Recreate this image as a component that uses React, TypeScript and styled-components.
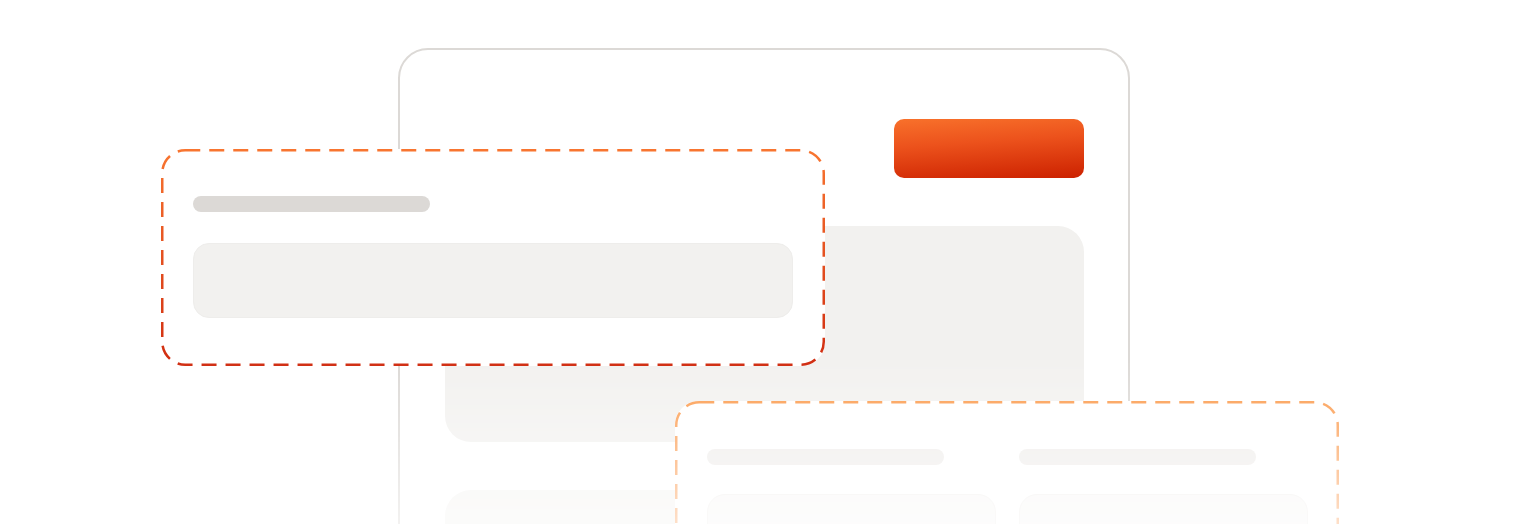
import React from "react";
import styled, { createGlobalStyle } from "styled-components";

const Global = createGlobalStyle`
  html, body { margin: 0; padding: 0; background: #ffffff; }
  body { font-family: "Inter", "Liberation Sans", sans-serif; }
`;

const Stage = styled.div`
  position: relative;
  width: 1536px;
  height: 524px;
  overflow: hidden;
  background: #ffffff;
  -webkit-mask-image: linear-gradient(to bottom, #000 360px, rgba(0, 0, 0, 0.35) 524px);
  mask-image: linear-gradient(to bottom, #000 360px, rgba(0, 0, 0, 0.35) 524px);
`;

const Window = styled.div`
  position: absolute;
  left: 398px;
  top: 48px;
  width: 732px;
  height: 620px;
  box-sizing: border-box;
  border: 2px solid #dcd9d6;
  border-radius: 30px;
  background: #ffffff;
  padding: 69px 44px 0 45px;
  display: flex;
  flex-direction: column;
  align-items: flex-end;
`;

const CtaButton = styled.div`
  flex: none;
  width: 190px;
  height: 59px;
  border-radius: 10px;
  background: linear-gradient(176deg, #f8712b 0%, #ec521c 40%, #cc2100 100%);
  margin-bottom: 48px;
`;

const Panel = styled.div`
  flex: none;
  width: 639px;
  height: 216px;
  border-radius: 26px;
  background: #f2f1ef;
  & + & {
    margin-top: 48px;
    background: #f5f4f2;
  }
`;

const Card = styled.div<{ $left: number; $top: number; $height: number; $faded?: boolean }>`
  position: absolute;
  left: ${(p) => p.$left}px;
  top: ${(p) => p.$top}px;
  width: 664px;
  height: ${(p) => p.$height}px;
  box-sizing: border-box;
  border-radius: 24px;
  background: #ffffff;
  padding: ${(p) => (p.$faded ? "48px 32px 0" : "47px 32px")};
`;

const CardBody = styled.div`
  display: flex;
  flex-direction: column;
  gap: 31px;
`;

const Line = styled.div<{ $tone: string }>`
  width: 237px;
  height: 16px;
  border-radius: 8px;
  background: ${(p) => p.$tone};
`;

const Field = styled.div`
  height: 75px;
  box-sizing: border-box;
  border-radius: 16px;
  background: #f2f1ef;
  border: 1px solid #eeedeb;
`;

const Columns = styled.div`
  display: grid;
  grid-template-columns: 289px 289px;
  column-gap: 23px;
  row-gap: 29px;
`;

const Tile = styled.div`
  height: 110px;
  box-sizing: border-box;
  border-radius: 18px;
  background: #f8f7f6;
  border: 1px solid #f2f0ee;
`;

const FrameSvg = styled.svg`
  position: absolute;
  inset: 0;
  pointer-events: none;
  overflow: visible;
`;

function DashedFrame({
  id,
  w,
  h,
  from,
  to,
}: {
  id: string;
  w: number;
  h: number;
  from: string;
  to: string;
}) {
  return (
    <FrameSvg width={w} height={h} viewBox={`0 0 ${w} ${h}`}>
      <defs>
        <linearGradient id={id} x1="0" y1="0" x2="0" y2="1">
          <stop offset="0" stopColor={from} />
          <stop offset="1" stopColor={to} />
        </linearGradient>
      </defs>
      <rect
        x={1.25}
        y={1.25}
        width={w - 2.5}
        height={h - 2.5}
        rx={23}
        ry={23}
        fill="none"
        stroke={`url(#${id})`}
        strokeWidth={2.5}
        strokeDasharray="15 9"
      />
    </FrameSvg>
  );
}

export default function App() {
  return (
    <>
      <Global />
      <Stage>
        <Window>
          <CtaButton />
          <Panel />
          <Panel />
        </Window>

        <Card $left={161} $top={149} $height={217}>
          <DashedFrame id="frameA" w={664} h={217} from="#f87530" to="#d02c10" />
          <CardBody>
            <Line $tone="#dcd9d6" />
            <Field />
          </CardBody>
        </Card>

        <Card $left={675} $top={401} $height={220} $faded>
          <DashedFrame id="frameB" w={664} h={220} from="#fb9a4c" to="#fcae78" />
          <Columns>
            <Line $tone="#efedeb" />
            <Line $tone="#efedeb" />
            <Tile />
            <Tile />
          </Columns>
        </Card>
      </Stage>
    </>
  );
}
